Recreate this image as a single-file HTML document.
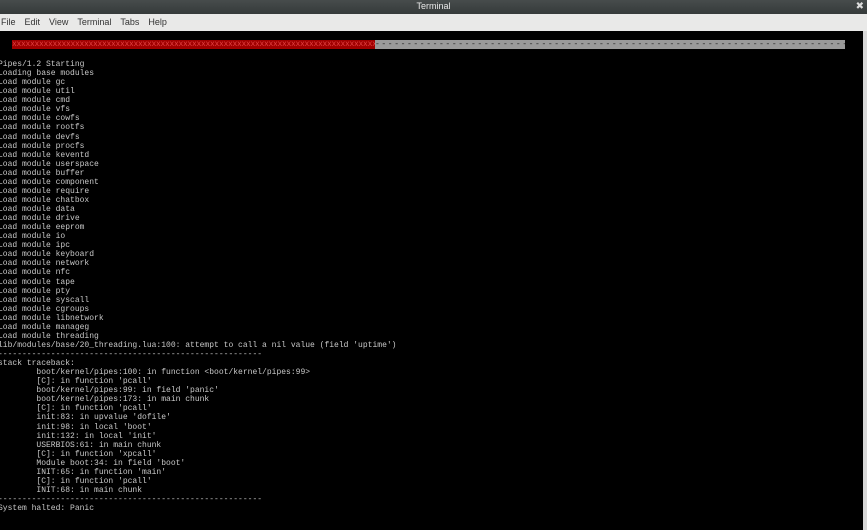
<!DOCTYPE html>
<html><head><style>
body{margin:0;width:867px;height:530px;overflow:hidden;background:#000;position:relative;font-family:"Liberation Sans",sans-serif}
#tb{position:absolute;left:0;top:0;width:867px;height:14px;background:linear-gradient(#474c4c,#353a3a);color:#e8e8e8;font-size:9px;text-align:center;line-height:13px}
#x{position:absolute;right:3px;top:0;font-size:10px;color:#ddd}
#mb{position:absolute;left:0;top:14px;width:867px;height:17px;background:#e9e9e8;font-size:9px;color:#333;line-height:17px}
#mb span{margin-left:1px;margin-right:8px}
#term{position:absolute;left:0;top:31px;width:863px;height:499px;background:#000}
#sb{position:absolute;left:863px;top:31px;width:4px;height:499px;background:#d8d8d8}
#red{position:absolute;left:12px;top:40px;width:363px;height:9px;background:#a00000;overflow:hidden;font:8px/9px "Liberation Mono",monospace;color:#e04040;white-space:nowrap;letter-spacing:-0.3px}
#gray{position:absolute;left:375px;top:40px;width:470px;height:9px;background:#9a9a9a;overflow:hidden;font:8px/9px "Liberation Mono",monospace;color:#222;white-space:nowrap;letter-spacing:-1.6px}
pre{position:absolute;left:-2px;top:60px;margin:0;font:8px/9.07px "Liberation Mono",monospace;color:#c8c8c8}
</style></head><body>
<div id="tb">Terminal<span id="x">✖</span></div>
<div id="mb"><span>File</span><span>Edit</span><span>View</span><span>Terminal</span><span>Tabs</span><span>Help</span></div>
<div id="term"></div><div id="sb"></div>
<div id="red">xxxxxxxxxxxxxxxxxxxxxxxxxxxxxxxxxxxxxxxxxxxxxxxxxxxxxxxxxxxxxxxxxxxxxxxxxxxxxxxxx</div>
<div id="gray">- - - - - - - - - - - - - - - - - - - - - - - - - - - - - - - - - - - - - - - - - - - - - - - - - - - - - - - - - - - - - - - - - - - - - - - - - - - - - - - - - - - - - - - - - - - - - - - - - - - - - - - - - - - - - - - - - - - - - - - - - - - - - - - - - - - - - - - - - - - - - - - - - - - - - - - - - - - - - - - - - - - - - - - - - - - - - - - - - - - - - - - - - - - - - - - - - - - - - - - - - - - - - - - - -</div>
<pre>Pipes/1.2 Starting
Loading base modules
Load module gc
Load module util
Load module cmd
Load module vfs
Load module cowfs
Load module rootfs
Load module devfs
Load module procfs
Load module keventd
Load module userspace
Load module buffer
Load module component
Load module require
Load module chatbox
Load module data
Load module drive
Load module eeprom
Load module io
Load module ipc
Load module keyboard
Load module network
Load module nfc
Load module tape
Load module pty
Load module syscall
Load module cgroups
Load module libnetwork
Load module manageg
Load module threading
lib/modules/base/20_threading.lua:100: attempt to call a nil value (field 'uptime')
-------------------------------------------------------
stack traceback:
        boot/kernel/pipes:100: in function &lt;boot/kernel/pipes:99&gt;
        [C]: in function 'pcall'
        boot/kernel/pipes:99: in field 'panic'
        boot/kernel/pipes:173: in main chunk
        [C]: in function 'pcall'
        init:83: in upvalue 'dofile'
        init:98: in local 'boot'
        init:132: in local 'init'
        USERBIOS:61: in main chunk
        [C]: in function 'xpcall'
        Module boot:34: in field 'boot'
        INIT:65: in function 'main'
        [C]: in function 'pcall'
        INIT:68: in main chunk
-------------------------------------------------------
System halted: Panic</pre>
</body></html>
